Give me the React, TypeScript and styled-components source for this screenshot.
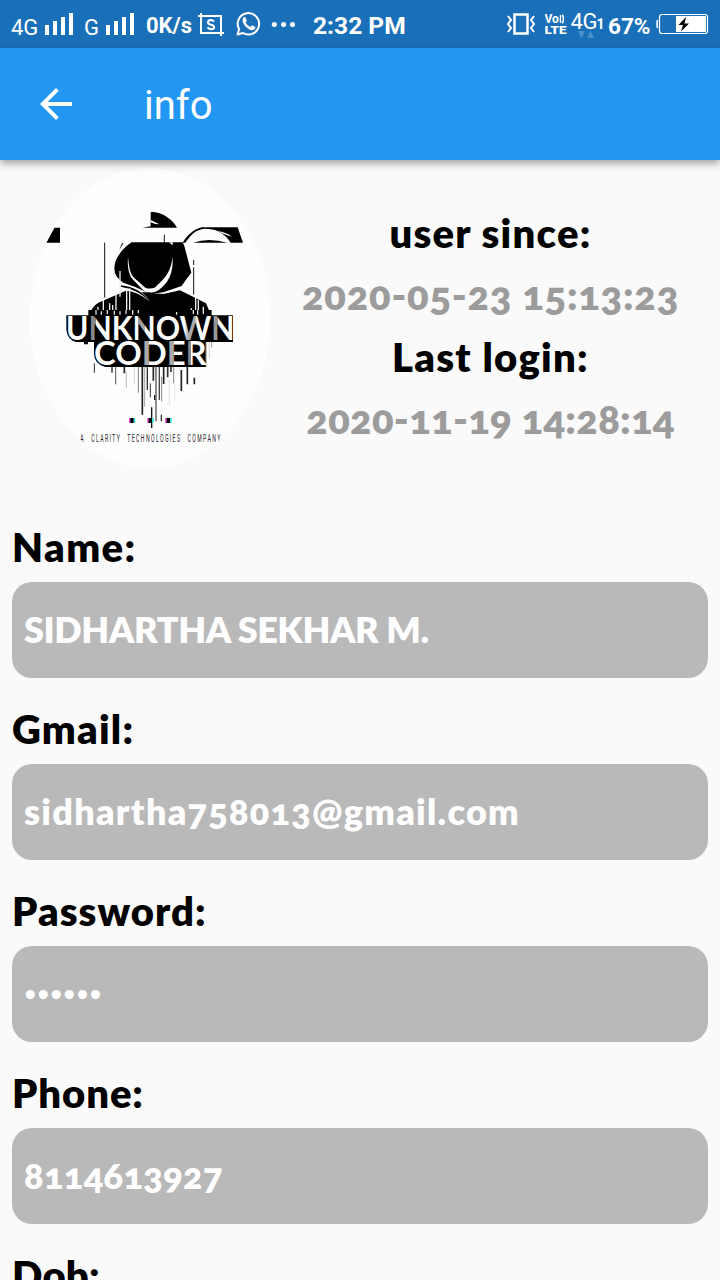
import React from "react";
import styled, { createGlobalStyle } from "styled-components";

const GlobalStyle = createGlobalStyle`
  * { box-sizing: border-box; }
  body { margin: 0; background: #fafafa; font-family: Lato, "Open Sans", sans-serif; }
`;

const Screen = styled.div`
  width: 720px;
  height: 1280px;
  overflow: hidden;
  background: #fafafa;
  display: flex;
  flex-direction: column;
`;

const StatusBar = styled.header`
  height: 48px;
  flex: none;
  background: #1a70b8;
  color: #fff;
  display: flex;
  align-items: flex-start;
  font-family: Roboto, sans-serif;
`;

const StatusText = styled.span<{ $w: number; $gap: number; $size: number; $drop?: number; $weight?: number }>`
  flex: none;
  width: ${(p) => p.$w}px;
  margin-left: ${(p) => p.$gap}px;
  margin-top: ${(p) => p.$drop ?? 0}px;
  font-size: ${(p) => p.$size}px;
  font-weight: ${(p) => p.$weight ?? 400};
  line-height: 48px;
  white-space: nowrap;
`;

const StatusIcon = styled.svg<{ $gap: number }>`
  flex: none;
  display: block;
  height: 48px;
  margin-left: ${(p) => p.$gap}px;
`;

const AppBar = styled.nav`
  height: 112px;
  flex: none;
  background: #2196f3;
  color: #fff;
  display: flex;
  align-items: center;
  padding-left: 32px;
  position: relative;
  z-index: 1;
  box-shadow: 0 3px 6px -1px rgba(0, 0, 0, 0.2), 0 6px 8px rgba(0, 0, 0, 0.12), 0 1px 12px rgba(0, 0, 0, 0.1);
`;

const Title = styled.h1`
  margin: 4px 0 0 64px;
  font: 400 40px/48px Roboto, sans-serif;
`;

const Profile = styled.section`
  height: 362px;
  flex: none;
  display: flex;
  padding: 8px 30px 0;
`;

const Avatar = styled.div`
  width: 240px;
  height: 300px;
  border-radius: 50%;
  overflow: hidden;
  background: #fdfffd;
  svg { display: block; }
`;

const Dates = styled.div`
  width: 441px;
  margin: 34px -31px 0 0;
  display: flex;
  flex-direction: column;
  align-items: center;
`;

const Line = styled.div<{ $track: number; $muted?: boolean }>`
  font-size: 40px;
  font-weight: 800;
  line-height: 62px;
  white-space: nowrap;
  font-variant-numeric: oldstyle-nums;
  letter-spacing: ${(p) => p.$track}px;
  color: ${(p) => (p.$muted ? "#9c9c9c" : "#000")};
`;

const Field = styled.div`
  flex: none;
  padding: 0 12px;
  margin-bottom: 26px;
`;

const Label = styled.div<{ $track: number }>`
  height: 60px;
  font-size: 40px;
  font-weight: 800;
  line-height: 51px;
  letter-spacing: ${(p) => p.$track}px;
`;

const Value = styled.div<{ $track: number; $masked?: boolean }>`
  height: 96px;
  padding-left: ${(p) => (p.$masked ? 13 : 12)}px;
  border-radius: 20px;
  background: #b9b9b9;
  color: #fff;
  font-size: ${(p) => (p.$masked ? 18 : 36)}px;
  font-weight: 800;
  line-height: 95px;
  font-variant-numeric: oldstyle-nums;
  letter-spacing: ${(p) => p.$track}px;
`;

const FIELDS = [
  { label: "Name:", value: "SIDHARTHA SEKHAR M.", lt: 1.4, vt: -0.42 },
  { label: "Gmail:", value: "sidhartha758013@gmail.com", lt: 1.2, vt: 1.27 },
  { label: "Password:", value: "••••••", lt: 1.05, vt: 2.6, masked: true },
  { label: "Phone:", value: "8114613927", lt: 0.9, vt: 0.45 },
  { label: "Dob:", value: "", lt: 0.2, vt: 0 },
];

const SignalBars = ({ gap }: { gap: number }) => (
  <StatusIcon $gap={gap} width="28" viewBox="0 0 28 48" fill="#fff">
    <path d="M0 25h4v10H0zM8 21h4v14H8zM16 17h4v18h-4zM24 13h4v22h-4z" />
  </StatusIcon>
);

// x, top, bottom, width, shade of each streak under the word mark
const DRIPS: [number, number, number, number, string][] = [
  [223, 160, 188, 3, "#222"], [276, 170, 188, 4, "#222"], [287, 170, 223, 3, "#555"], [313, 170, 190, 5, "#222"],
  [319, 185, 234, 2, "#999"], [343, 170, 224, 2, "#bbb"], [355, 170, 248, 3, "#777"], [367, 170, 314, 5, "#222"],
  [374, 170, 290, 2, "#777"], [382, 170, 240, 4, "#333"], [391, 220, 262, 3, "#333"], [395, 292, 354, 4, "#111"],
  [400, 170, 212, 5, "#222"], [408, 170, 334, 4, "#555"], [404, 255, 270, 4, "#222"], [418, 170, 270, 4, "#444"],
  [425, 200, 274, 3, "#888"], [424, 314, 334, 4, "#333"], [431, 170, 222, 5, "#222"], [443, 170, 202, 5, "#333"],
  [448, 210, 286, 2, "#ccc"], [453, 170, 186, 5, "#333"], [461, 170, 220, 3, "#888"], [464, 220, 272, 1, "#bbb"],
  [484, 180, 243, 5, "#222"], [502, 170, 223, 5, "#222"], [523, 203, 223, 5, "#222"], [557, 96, 171, 4, "#444"],
  [568, 96, 146, 2, "#bbb"], [575, 96, 112, 2, "#666"], [198, 94, 103, 12, "#111"], [236, 94, 116, 8, "#111"],
];

const Logo = () => (
  <svg width="240" height="300" viewBox="30 168 240 300">
    <defs>
      <linearGradient id="top" gradientUnits="userSpaceOnUse" x1="143" y1="0" x2="637" y2="0">
        <stop offset="0.13" stopColor="#fff" /><stop offset="0.13" stopColor="#888" />
        <stop offset="0.175" stopColor="#888" /><stop offset="0.175" stopColor="#fff" />
        <stop offset="0.43" stopColor="#fff" /><stop offset="0.43" stopColor="#999" />
        <stop offset="0.47" stopColor="#aaa" /><stop offset="0.47" stopColor="#fff" />
        <stop offset="0.71" stopColor="#fff" /><stop offset="0.73" stopColor="#aaa" />
        <stop offset="0.77" stopColor="#aaa" /><stop offset="0.79" stopColor="#fff" />
        <stop offset="0.87" stopColor="#fff" /><stop offset="0.87" stopColor="#999" />
        <stop offset="0.91" stopColor="#999" /><stop offset="0.91" stopColor="#fff" />
      </linearGradient>
      <linearGradient id="low" gradientUnits="userSpaceOnUse" x1="226" y1="0" x2="557" y2="0">
        <stop offset="0.44" stopColor="#fff" /><stop offset="0.44" stopColor="#aaa" />
        <stop offset="0.49" stopColor="#aaa" /><stop offset="0.49" stopColor="#fff" />
        <stop offset="0.66" stopColor="#fff" /><stop offset="0.66" stopColor="#aaa" />
        <stop offset="0.71" stopColor="#aaa" /><stop offset="0.71" stopColor="#fff" />
        <stop offset="0.82" stopColor="#fff" /><stop offset="0.82" stopColor="#888" />
        <stop offset="0.87" stopColor="#888" /><stop offset="0.87" stopColor="#fff" />
      </linearGradient>
    </defs>
    <g transform="translate(20 160) scale(0.33333)">
      <path d="M103 203H120V248H79ZM392 157C420 151 460 180 471 203H367L392 199Z" />
      <path d="M392 180L418 193L406 192L392 187Z" fill="#fff" />
      <path d="M488 248C502 225 520 209 545 202H653L669 248H632C612 216 585 206 555 206C525 208 512 225 496 248ZM520 248Q565 232 622 248Z" />
      <path d="M592 213Q618 216 636 230Q612 224 592 213Z" fill="#fff" />
      <path d="M335 247H488L493 258L514 338Q498 358 485 378L430 397L396 401L384 399Q350 380 310 368Q283 352 283 325C283 292 312 262 335 247ZM311 248L298 270L305 251Z" />
      <path d="M447 247L458 256V247Z" fill="#fff" />
      <path d="M324 290C327 322 330 340 342 353L376 383Q392 389 406 382C430 356 451 345 458 290C460 340 447 368 412 393Q392 402 372 393L338 358C325 340 322 320 324 290Z" fill="#fff" />
      <path d="M208 468Q214 440 235 428L318 392Q350 392 388 424Q382 410 365 396L392 399L430 402L480 391L558 430Q568 450 572 468Z" />
      <path d="M302 376Q360 382 390 425Q355 388 302 380Z" />
      <g stroke="#111" strokeWidth="3">
        <path d="M254 248V413M521 300V315M521 322V404M433 224V248" />
      </g>
      <g stroke="#eee" strokeWidth="4">
        <path d="M288 400V462M300 333V410M320 385V462M329 385V462M250 415V468M269 430V460M278 435V462M234 440V468M527 412V462M535 420V464M550 440V468M514 445V468" />
      </g>
    </g>
    <g transform="translate(20 310) scale(0.33333)">
      <path d="M139 16H639V96H170Q143 92 139 60ZM222 96H558V171H255Q222 160 222 132Z" />
      <path d="M205 0H575V18H205Z" />
      <path d="M228 0V14M244 4V14M262 0V12M283 2V14M300 4V14M318 0V12M338 0V14M355 0V10M470 6V14M520 0V12M533 0V14M550 0V12" stroke="#ddd" strokeWidth="4" />
      {DRIPS.map(([x, y1, y2, w, c], i) => (
        <line key={i} x1={x} x2={x} y1={y1} y2={y2} stroke={c} strokeWidth={w} />
      ))}
      <g fontFamily="Lato, sans-serif" fontWeight="700" fontSize="96">
        <text x="138" y="90" textLength="506" lengthAdjust="spacingAndGlyphs" fill="url(#top)">UNKNOWN</text>
        <text x="222" y="166" textLength="338" lengthAdjust="spacingAndGlyphs" fill="url(#low)">CODER</text>
      </g>
      {[336, 391, 445].map((x) => (
        <g key={x}>
          <path d={`M${x - 9} 324h5v15h-5z`} fill="#e33bd8" />
          <path d={`M${x + 5} 324h5v15h-5z`} fill="#2de0dc" />
          <path d={`M${x - 5} 324h10v15h-10z`} />
        </g>
      ))}
      <text x="181" y="397" textLength="424" lengthAdjust="spacingAndGlyphs" fontFamily="Roboto, sans-serif" fontSize="30" fill="#2b202b" letterSpacing="8" wordSpacing="20">A CLARITY TECHNOLOGIES COMPANY</text>
    </g>
  </svg>
);

export default function App() {
  return (
    <Screen>
      <GlobalStyle />
      <StatusBar>
        <StatusText $w={28} $gap={11} $size={22} $drop={4}>4G</StatusText>
        <SignalBars gap={6} />
        <StatusText $w={16} $gap={11} $size={22} $drop={4}>G</StatusText>
        <SignalBars gap={6} />
        <StatusText $w={48} $gap={12} $size={22} $drop={2} $weight={700}>0K/s</StatusText>
        <StatusIcon $gap={4} width="26" viewBox="198 0 26 48" fill="none" stroke="#fff" strokeWidth="2">
          <path d="M198 16H221V36M201 13V33H224" />
          <path d="M214 21.6Q213 20 210.800 20Q208 20.200 208 22.200Q208 24 211 24.700Q214.200 25.500 214.200 27.300Q214 29.200 211 29.200Q208.500 29.200 207.600 27.200" />
        </StatusIcon>
        <StatusIcon $gap={12} width="25" viewBox="236.500 0.500 25 48" fill="none" stroke="#fff">
          <path d="M238 35L239.600 29.600A10.700 10.700 0 1 1 243.400 33.500Z" strokeWidth="2" strokeLinejoin="round" />
          <path d="M243.500 18.500Q245 17 246 18L247.300 21Q247 22.300 246 23Q247.500 26 251 27.500L252.500 25.800L256 27.500Q256 30 253 30.600Q250 31 246 27Q242 22.500 243.500 18.500Z" fill="#fff" stroke="none" />
        </StatusIcon>
        <StatusIcon $gap={10} width="26" viewBox="271 0 26 48" fill="#fff">
          <circle cx="274.300" cy="24.500" r="2.500" /><circle cx="283.600" cy="24.500" r="2.500" /><circle cx="292.500" cy="24.500" r="2.500" />
        </StatusIcon>
        <StatusText $w={96} $gap={16} $size={24.6} $drop={2} $weight={700}>2:32 PM</StatusText>
        <StatusIcon $gap={97} width="30" viewBox="506 0 30 48" fill="none" stroke="#fff" strokeWidth="2">
          <rect x="514.500" y="14.500" width="13" height="19" strokeWidth="2.500" />
          <path d="M508 16L511 20L508 24L511 28L508 32M534 16L531 20L534 24L531 28L534 32" />
        </StatusIcon>
        <StatusIcon $gap={9} width="23" viewBox="545 0 23 48" fill="#fff" fontFamily="Roboto, sans-serif" fontWeight="700">
          <text x="544.500" y="23" fontSize="12">Vo</text>
          <path d="M560.500 15V23M562.500 14.500Q564.500 19 562.500 23.500" fill="none" stroke="#fff" strokeWidth="1.400" />
          <text x="544.500" y="34" fontSize="11.500" fontWeight="900" textLength="22" lengthAdjust="spacingAndGlyphs">LTE</text>
        </StatusIcon>
        <StatusIcon $gap={3} width="34" viewBox="571 0 34 48" fill="#fff" fontFamily="Roboto, sans-serif">
          <text x="570.500" y="29" fontSize="22" textLength="27">4G</text>
          <text x="596.500" y="29" fontSize="14" fontWeight="700">1</text>
          <path d="M578 31H585L581.500 38ZM587 38H594L590.500 31Z" fill="#4a90cc" />
        </StatusIcon>
        <StatusText $w={43} $gap={3} $size={22.5} $drop={2} $weight={700}>67%</StatusText>
        <StatusIcon $gap={5} width="53" viewBox="656 0 53 48" fill="none" stroke="#fff">
          <path d="M657.500 20Q656.500 24 657.500 28" strokeWidth="1.500" />
          <rect x="659.500" y="14.500" width="48" height="19" rx="2.500" strokeWidth="1.200" />
          <rect x="676" y="16" width="30" height="16" fill="#fff" stroke="none" />
          <path d="M686 17L678.500 25H683L681 31.500L689 23.500H684.500Z" fill="#000" stroke="none" />
        </StatusIcon>
      </StatusBar>
      <AppBar>
        <svg width="48" height="48" viewBox="0 0 24 24" fill="#fff">
          <path d="M20 11H7.830l5.590-5.590L12 4l-8 8 8 8 1.410-1.410L7.830 13H20v-2z" />
        </svg>
        <Title>info</Title>
      </AppBar>
      <Profile>
        <Avatar><Logo /></Avatar>
        <Dates>
          <Line $track={1.25}>user since:</Line>
          <Line $track={0.75} $muted>2020-05-23 15:13:23</Line>
          <Line $track={1.25}>Last login:</Line>
          <Line $track={0.3} $muted>2020-11-19 14:28:14</Line>
        </Dates>
      </Profile>
      {FIELDS.map((f) => (
        <Field key={f.label}>
          <Label $track={f.lt}>{f.label}</Label>
          <Value $track={f.vt} $masked={f.masked}>{f.value}</Value>
        </Field>
      ))}
    </Screen>
  );
}
